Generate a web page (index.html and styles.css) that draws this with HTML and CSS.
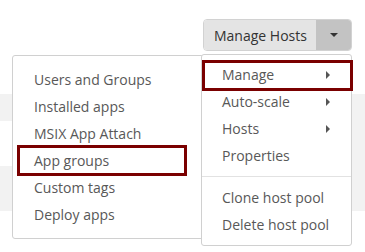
FILE: index.html
```html
<!DOCTYPE html>
<html>
<head>
    <meta charset="utf-8">
    <title>Host pool actions</title>
    <link rel="stylesheet" href="styles.css">
</head>
<body>
<div class="toolbar">
    <div class="host-actions">
        <div class="split-btn">
            <span class="btn-main">Manage Hosts</span>
            <span class="btn-caret"><i class="caret-down"></i></span>
        </div>

        <ul class="menu sub-menu">
            <li>Users and Groups</li>
            <li>Installed apps</li>
            <li>MSIX App Attach</li>
            <li class="selected">App groups</li>
            <li>Custom tags</li>
            <li>Deploy apps</li>
        </ul>

        <ul class="menu host-menu">
            <li class="has-sub selected">Manage <i class="caret-right"></i></li>
            <li class="has-sub">Auto-scale <i class="caret-right"></i></li>
            <li class="has-sub">Hosts <i class="caret-right"></i></li>
            <li>Properties</li>
            <li class="divider"></li>
            <li>Clone host pool</li>
            <li>Delete host pool</li>
        </ul>
    </div>
</div>

<div class="rows">
    <div class="row shaded"></div>
    <div class="row split"><div class="row-fill"></div><div class="row-side"></div></div>
    <div class="row shaded"></div>
</div>
</body>
</html>
```

FILE: styles.css
```css
html {
    height: 100%;
}
body {
    margin: 0;
    padding: 0;
    min-height: 252px;
    background: white;
    font-family: "Open Sans", "Liberation Sans", sans-serif;
    font-size: 14px;
    color: #585858;
}
.toolbar {
    display: flex;
    justify-content: flex-end;
    padding: 19px 13px 0 0;
}
.host-actions {
    position: relative;
}
.split-btn {
    display: flex;
    height: 32px;
    width: 149px;
    box-sizing: border-box;
    border: 1px solid #d2d2d2;
    border-radius: 4px;
    overflow: hidden;
    color: #333;
}
.btn-main {
    flex: 1;
    display: flex;
    align-items: center;
    padding-left: 10px;
    background: #e4e4e4;
}
.btn-caret {
    width: 35px;
    display: flex;
    align-items: center;
    justify-content: center;
    background: #c3c3c3;
}
.caret-down {
    width: 0;
    height: 0;
    border-top: 4px solid #333;
    border-left: 4px solid transparent;
    border-right: 4px solid transparent;
}
.menu {
    position: absolute;
    list-style: none;
    margin: 0;
    background: white;
    border: 1px solid #d0d0d0;
    border-radius: 3px;
    box-sizing: border-box;
}
.menu li {
    position: relative;
    line-height: 27px;
    height: 27px;
    white-space: nowrap;
}
.menu li.selected::after {
    content: "";
    position: absolute;
    border: 3px solid #7a0000;
}
.host-menu {
    top: 35px;
    right: 0;
    width: 151px;
    padding: 6px 0 7px;
    z-index: 2;
}
.host-menu li {
    padding: 0 20px;
}
.host-menu li.has-sub {
    display: flex;
    align-items: center;
    justify-content: space-between;
    padding-right: 21px;
}
.host-menu li.selected::after {
    top: -1px;
    bottom: -3px;
    left: 0;
    right: -2px;
}
.host-menu li.divider {
    height: 1px;
    padding: 0;
    margin: 7px 0;
    background: #e2e2e2;
}
.caret-right {
    width: 0;
    height: 0;
    border-left: 4px solid #555;
    border-top: 4px solid transparent;
    border-bottom: 4px solid transparent;
}
.sub-menu {
    top: 36px;
    left: -191px;
    width: 192px;
    padding: 10px 0 10px;
    z-index: 1;
}
.sub-menu li {
    padding-left: 21px;
}
.sub-menu li.selected::after {
    top: -2px;
    bottom: -2px;
    left: 4px;
    right: 16px;
}
.rows {
    margin-top: 43px;
}
.row {
    height: 45px;
}
.row.shaded {
    background: #f2f2f2;
}
.rows .row:first-child {
    height: 27px;
}
.row.split {
    display: flex;
}
.row-fill {
    flex: 1;
}
.row-side {
    width: 14px;
    background: #f2f2f2;
}
```
